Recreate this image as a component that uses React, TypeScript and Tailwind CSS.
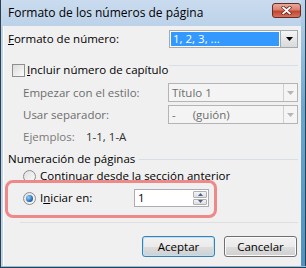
import React from "react";

const Arrow = ({ color = "#000" }: { color?: string }) => (
  <svg width="7" height="4" viewBox="0 0 7 4">
    <path d="M0 0 H7 L3.5 4 Z" fill={color} />
  </svg>
);

const ComboSelected = () => (
  <div className="flex h-[18px] w-[129px] border border-[#a3a9b1] bg-white">
    <div className="flex-1 m-[1px] bg-[#3399ff] text-white pl-[2px] leading-[14px]">1, 2, 3, ...</div>
    <div className="w-[17px] border-l border-[#a3a9b1] bg-gradient-to-b from-[#f5f5f5] to-[#d9d9d9] flex items-center justify-center">
      <Arrow />
    </div>
  </div>
);

const ComboDisabled = ({ children }: { children: React.ReactNode }) => (
  <div className="flex h-[19px] w-[130px] border border-[#b4b4b4] bg-[#f4f4f4]">
    <div className="flex-1 text-[#6d6d6d] pl-[3px] leading-[17px]">{children}</div>
    <div className="w-[14px] border-l border-[#cfcfcf] flex items-center justify-center">
      <Arrow color="#b5b5b5" />
    </div>
  </div>
);

const Radio = ({ checked }: { checked?: boolean }) => (
  <div className="w-[13px] h-[13px] rounded-full border border-[#8d8d8d] bg-gradient-to-br from-[#e0e0e0] to-[#fafafa] flex items-center justify-center shrink-0">
    {checked && (
      <div className="w-[7px] h-[7px] rounded-full bg-[radial-gradient(circle_at_35%_35%,#8fd3ff,#1e5fa8_70%)]" />
    )}
  </div>
);

const Button = ({ children, focused }: { children: React.ReactNode; focused?: boolean }) => (
  <div
    className={
      "w-[73px] h-[21px] rounded-[3px] border flex items-center justify-center text-black bg-[linear-gradient(to_bottom,#f2f2f2_0%,#ebebeb_50%,#dddddd_51%,#cfcfcf_100%)] " +
      (focused ? "border-[#3c7fb1] shadow-[inset_0_0_0_1px_#b6e3f8]" : "border-[#707070] shadow-[inset_0_0_0_1px_#fbfbfb]")
    }
  >
    {children}
  </div>
);

export default function App() {
  return (
    <div
      className="w-[306px] h-[268px] flex flex-col bg-[#bcd3ea] border-l border-[#2f3f52] pr-[5px] pb-[2px] relative overflow-hidden text-[11.5px] text-black"
      style={{ fontFamily: '"Segoe UI", "Open Sans", sans-serif' }}
    >
      {/* right frame strip */}
      <div className="absolute right-0 top-0 bottom-0 w-[5px] bg-[linear-gradient(to_bottom,#bcd3ea,#6aa7cf_40%,#4c93c3)] border-r border-[#2f3f52]" />
      <div className="absolute left-0 right-0 bottom-0 h-[2px] bg-[#8ec2de] border-b border-[#2f3f52]" />

      {/* Title bar */}
      <div className="h-[26px] shrink-0 flex items-center justify-between pl-[7px] bg-gradient-to-b from-[#cadbee] to-[#bcd2e9]">
        <span className="text-[12px] leading-none text-black">Formato de los números de página</span>
        <div className="w-[29px] h-[15px] mb-[6px] rounded-[3px] border border-[#6b2a22] bg-[linear-gradient(to_bottom,#e9a99b_0%,#d9806f_45%,#c1442f_55%,#d4735c_100%)] flex items-center justify-center">
          <svg width="11" height="9" viewBox="0 0 11 9">
            <path d="M1 0.5 L5.5 4 L10 0.5 M1 8.5 L5.5 5 L10 8.5" stroke="#5a1a10" strokeWidth="3.2" fill="none" />
            <path d="M1.5 1 L5.5 4.3 L9.5 1 M1.5 8 L5.5 4.7 L9.5 8" stroke="#ffffff" strokeWidth="1.8" fill="none" />
          </svg>
        </div>
      </div>

      {/* Client area */}
      <div className="flex-1 bg-[#f0f0f0] ml-[2px] border-l border-white flex flex-col pl-[4px] pr-[3px] pt-[4px]">
        <div className="flex items-center justify-between h-[18px]">
          <span><span className="underline">F</span>ormato de número:</span>
          <ComboSelected />
        </div>

        <div className="flex items-center h-[14px] mt-[15px] pl-[4px] relative">
          <div className="w-[13px] h-[13px] border border-[#8e8f8f] bg-gradient-to-br from-[#dcdcdc] to-[#fbfbfb] shrink-0" />
          <span className="ml-[2px]"><span className="underline">I</span>ncluir número de capítulo</span>
          <div className="absolute right-[0px] left-[161px] top-[2px] h-px bg-[#d5dfe5]" />
        </div>

        <div className="flex items-center justify-between h-[19px] mt-[6px] pl-[15px] text-[#6d6d6d]">
          <span>Empezar con el estilo:</span>
          <ComboDisabled>Título 1</ComboDisabled>
        </div>

        <div className="flex items-center justify-between h-[19px] mt-[3px] pl-[15px] text-[#6d6d6d]">
          <span>Usar separador:</span>
          <ComboDisabled>
            <span className="mr-[17px]">-</span>(guión)
          </ComboDisabled>
        </div>

        <div className="flex items-center h-[14px] mt-[6px] pl-[15px]">
          <span className="text-[#7a7a7a] w-[63px]">Ejemplos:</span>
          <span className="text-[#303030]">1-1, 1-A</span>
        </div>

        <div className="flex items-center h-[14px] mt-[8px]">
          <span>Numeración de páginas</span>
          <div className="flex-1 h-px bg-[#d5dfe5] ml-[4px]" />
        </div>

        <div className="flex items-center h-[14px] mt-[3px] pl-[15px]">
          <Radio />
          <span className="ml-[4px] -mt-[1px]"><span className="underline">C</span>ontinuar desde la sección anterior</span>
        </div>

        <div className="flex items-center h-[18px] mt-[6px] pl-[15px]">
          <Radio checked />
          <span className="ml-[4px] w-[94px]">I<span className="underline">n</span>iciar en:</span>
          <div className="w-[75px] h-[18px] border border-[#abadb3] bg-white flex">
            <span className="flex-1 pl-[3px] leading-[16px]">1</span>
            <div className="w-[16px] flex flex-col gap-px p-px">
              <div className="flex-1 border border-[#b0b0b0] rounded-[1px] bg-gradient-to-b from-[#f4f4f4] to-[#dedede] flex items-center justify-center">
                <svg width="5" height="3" viewBox="0 0 5 3"><path d="M0 3 H5 L2.5 0 Z" fill="#4d6185" /></svg>
              </div>
              <div className="flex-1 border border-[#b0b0b0] rounded-[1px] bg-gradient-to-b from-[#f4f4f4] to-[#dedede] flex items-center justify-center">
                <svg width="5" height="3" viewBox="0 0 5 3"><path d="M0 0 H5 L2.5 3 Z" fill="#4d6185" /></svg>
              </div>
            </div>
          </div>
        </div>

        <div className="h-px bg-[#dfdfdf] mt-[15px] ml-[12px]" />

        <div className="flex justify-end gap-[9px] mt-[13px] pr-[1px]">
          <Button focused>Aceptar</Button>
          <Button>Cancelar</Button>
        </div>
      </div>

      {/* red highlight annotation */}
      <div className="absolute left-[4px] top-[180px] w-[212px] h-[38px] rounded-[8px] border-[3px] border-[#ef8888] pointer-events-none" />
    </div>
  );
}
